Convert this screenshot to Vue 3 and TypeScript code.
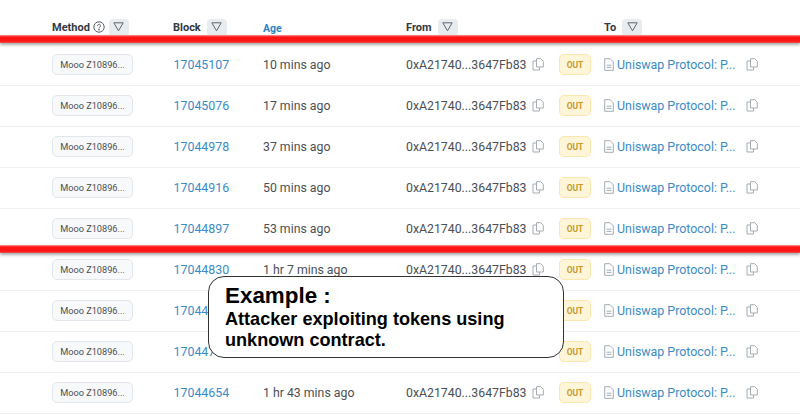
<script setup lang="ts">
const rows: { block: string; age?: string; addr?: boolean }[] = [
  { block: '17045107', age: '10 mins ago', addr: true },
  { block: '17045076', age: '17 mins ago', addr: true },
  { block: '17044978', age: '37 mins ago', addr: true },
  { block: '17044916', age: '50 mins ago', addr: true },
  { block: '17044897', age: '53 mins ago', addr: true },
  { block: '17044830', age: '1 hr 7 mins ago', addr: true },
  { block: '17044' },
  { block: '170447' },
  { block: '17044654', age: '1 hr 43 mins ago', addr: true },
]
</script>

<template>
  <div class="page">
    <div class="row head">
      <div class="cell">
        <b>Method</b>
        <svg class="help" width="12" height="12" viewBox="0 0 12 12" fill="none" stroke="#555d66" stroke-width="1">
          <circle cx="6" cy="6" r="5.2" />
          <path d="M4.5 4.7a1.5 1.5 0 1 1 2.3 1.3c-.5.3-.8.6-.8 1.1" stroke-linecap="round" />
          <circle cx="6" cy="8.8" r=".4" fill="#555d66" />
        </svg>
        <span class="filter method-filter"><svg width="11" height="10" viewBox="0 0 11 10" fill="none" stroke="#5d6670" stroke-width="1"><path d="M.8.8h9.4L5.5 8.8z" stroke-linejoin="round" /></svg></span>
      </div>
      <div class="cell">
        <b>Block</b>
        <span class="filter"><svg width="11" height="10" viewBox="0 0 11 10" fill="none" stroke="#5d6670" stroke-width="1"><path d="M.8.8h9.4L5.5 8.8z" stroke-linejoin="round" /></svg></span>
      </div>
      <div class="cell"><b class="age-head">Age</b></div>
      <div class="cell">
        <b>From</b>
        <span class="filter"><svg width="11" height="10" viewBox="0 0 11 10" fill="none" stroke="#5d6670" stroke-width="1"><path d="M.8.8h9.4L5.5 8.8z" stroke-linejoin="round" /></svg></span>
      </div>
      <div class="cell"></div>
      <div class="cell">
        <b>To</b>
        <span class="filter"><svg width="11" height="10" viewBox="0 0 11 10" fill="none" stroke="#5d6670" stroke-width="1"><path d="M.8.8h9.4L5.5 8.8z" stroke-linejoin="round" /></svg></span>
      </div>
    </div>

    <div v-for="r in rows" :key="r.block" class="row body">
      <div class="cell"><span class="method">Mooo Z10896...</span></div>
      <div class="cell link block">{{ r.block }}</div>
      <div class="cell text">{{ r.age }}</div>
      <div class="cell text">
        <template v-if="r.addr">
          <span class="addr">0xA21740...3647Fb83</span>
          <svg class="copy" width="13" height="13" viewBox="0 0 13 13" fill="none" stroke="#a4acb6" stroke-width="1">
            <path d="M4.5 3H1v9h6.5V9" />
            <path d="M4.5.7h4.2l2.6 2.6V9H4.5z" fill="#fff" />
          </svg>
        </template>
      </div>
      <div class="cell"><span class="out">OUT</span></div>
      <div class="cell link">
        <svg class="doc" width="10" height="13" viewBox="0 0 10 13" fill="none" stroke="#a3acb6" stroke-width="1">
          <path d="M.7.7h5.4l3.2 3.2v8.4H.7z" />
          <path d="M2.6 7.2h4.8M2.6 9.4h4.8" />
        </svg>
        <span class="name">Uniswap Protocol: P...</span>
        <svg class="copy to-copy" width="13" height="13" viewBox="0 0 13 13" fill="none" stroke="#a4acb6" stroke-width="1">
          <path d="M4.5 3H1v9h6.5V9" />
          <path d="M4.5.7h4.2l2.6 2.6V9H4.5z" fill="#fff" />
        </svg>
      </div>
    </div>

    <div class="redline first"></div>
    <div class="redline second"></div>

    <div class="note">
      <div class="note-title">Example :</div>
      <div class="note-body">Attacker exploiting tokens using unknown contract.</div>
    </div>
  </div>
</template>

<style>
html, body { margin: 0; background: #fff; overflow: hidden; }
</style>

<style scoped>
.page {
  position: relative;
  width: 800px;
  height: 418px;
  overflow: hidden;
  background: #fff;
  font-family: Roboto, "Liberation Sans", sans-serif;
  color: #4a4f55;
}
.row {
  display: grid;
  grid-template-columns: 121px 90px 143px 153px 45px 1fr;
  padding-left: 52px;
  box-sizing: border-box;
  align-items: center;
}
.head { height: 45px; padding-top: 9px; }
.body { height: 41px; padding-bottom: 1px; border-bottom: 1px solid #eef0f2; }
.cell { display: flex; align-items: center; white-space: nowrap; min-width: 0; height: 100%; }
.head b { font-size: 11px; font-weight: 700; color: #33393f; }
.head .age-head { font-size: 10.5px; color: #2a85c4; position: relative; top: 1px; }
.help { margin-left: 3px; }
.filter {
  display: inline-flex;
  align-items: center;
  justify-content: center;
  width: 20px;
  height: 17px;
  margin-left: 6px;
  border-radius: 4px;
  background: #e9ecef;
}
.head .method-filter { margin-left: 4px; }
.method {
  box-sizing: border-box;
  width: 81px;
  height: 21px;
  display: flex;
  align-items: center;
  justify-content: center;
  font-size: 9.2px;
  color: #4a4f55;
  background: #f8f9fa;
  border: 1px solid #e3e6ea;
  border-radius: 5px;
}
.link { font-size: 12.4px; color: #3a8cc8; }
.block { padding-left: .5px; }
.text { font-size: 12.3px; }
.copy { margin-left: 6px; }
.out {
  box-sizing: border-box;
  width: 32px;
  height: 21px;
  display: flex;
  align-items: center;
  justify-content: center;
  font-size: 8.5px;
  font-weight: 700;
  color: #c99a2c;
  background: #fff5d9;
  border: 1px solid #fbe6ae;
  border-radius: 5px;
}
.doc { margin-right: 3px; }
.name { width: 123px; }
.to-copy { margin-left: 6px; }
.redline {
  position: absolute;
  left: 0;
  width: 800px;
  height: 8px;
  background: linear-gradient(#ff9a9a, #ff1414 25%, #ff1414 75%, #e85050);
  box-shadow: 0 2px 3px rgba(90, 90, 90, .5);
}
.first { top: 35px; }
.second { top: 245px; }
.note {
  position: absolute;
  left: 208px;
  top: 276px;
  width: 356px;
  height: 82px;
  box-sizing: border-box;
  padding: 6px 16px 0;
  border: 1px solid #333;
  border-radius: 16px;
  background: #fff;
  color: #000;
  font-family: "Liberation Sans", sans-serif;
  font-weight: 700;
}
.note-title { font-size: 22.4px; line-height: 26px; }
.note-body { font-size: 18.1px; line-height: 21px; }
</style>
